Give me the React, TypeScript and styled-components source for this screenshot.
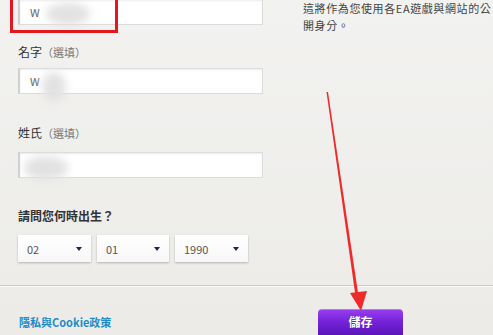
import styled, { createGlobalStyle } from "styled-components";

const GlobalStyle = createGlobalStyle`
  html, body {
    margin: 0;
    padding: 0;
    background: #efefed;
  }
  body {
    font-family: "Noto Sans CJK TC", "Noto Sans", sans-serif;
  }
`;

const Page = styled.div`
  position: relative;
  width: 493px;
  height: 335px;
  overflow: hidden;
  background: linear-gradient(180deg, #f2f2f0 0%, #ecebe8 100%);
  color: #333;
`;

const Body = styled.div`
  display: flex;
  padding-left: 18px;
  height: 285px;
`;

const FormColumn = styled.div`
  display: flex;
  flex-direction: column;
  width: 245px;
`;

const InfoColumn = styled.div`
  margin-left: 40px;
  font-size: 11px;
  line-height: 17px;
  letter-spacing: 0.6px;
  color: #444;
  white-space: nowrap;
`;

const Label = styled.div<{ $bold?: boolean; $top: number; $bottom: number }>`
  font-size: 12px;
  line-height: 16px;
  font-weight: ${({ $bold }) => ($bold ? 700 : 400)};
  color: #333;
  margin-top: ${({ $top }) => $top}px;
  margin-bottom: ${({ $bottom }) => $bottom}px;
`;

const Optional = styled.span`
  color: #777;
  font-size: 11px;
`;

const Field = styled.div<{ $top?: number }>`
  display: flex;
  align-items: center;
  height: 26px;
  margin-top: ${({ $top }) => $top ?? 0}px;
  box-sizing: border-box;
  background: #fff;
  border: 1px solid #dcdcdc;
  border-left: 2px solid #d0d0d0;
  box-shadow: inset 0 1px 2px rgba(0, 0, 0, 0.08);
  padding-left: 10px;
  font-size: 11px;
  color: #666;
`;

const Blob = styled.span<{ $w: number; $h: number; $dx: number; $dy: number }>`
  display: inline-block;
  width: ${({ $w }) => $w}px;
  height: ${({ $h }) => $h}px;
  margin-left: ${({ $dx }) => $dx}px;
  transform: translateY(${({ $dy }) => $dy}px);
  background: #e2e2e2;
  border-radius: 50%;
  filter: blur(4px);
`;

const SelectRow = styled.div`
  display: flex;
  gap: 6px;
`;

const Select = styled.div<{ $w: number }>`
  display: flex;
  align-items: center;
  justify-content: space-between;
  width: ${({ $w }) => $w}px;
  height: 27px;
  box-sizing: border-box;
  padding: 0 9px 0 9px;
  background: linear-gradient(180deg, #ffffff 0%, #f7f7f7 100%);
  box-shadow: 0 1px 2px rgba(0, 0, 0, 0.25);
  font-size: 11px;
  color: #555;
`;

const Caret = styled.span`
  width: 0;
  height: 0;
  border-left: 3.5px solid transparent;
  border-right: 3.5px solid transparent;
  border-top: 4px solid #2a1a5e;
`;

const Footer = styled.div`
  display: flex;
  align-items: flex-end;
  justify-content: space-between;
  height: 50px;
  box-sizing: border-box;
  border-top: 1px solid #c9c9c7;
  box-shadow: inset 0 1px 0 #fafafa;
  padding: 0 90px 0 19px;
`;

const PolicyLink = styled.a`
  font-size: 11px;
  font-weight: 700;
  color: #1f8cc6;
  text-decoration: none;
  line-height: 14px;
  margin-bottom: 6px;
`;

const SaveButton = styled.button`
  width: 85px;
  height: 26px;
  border: none;
  border-radius: 4px 4px 0 0;
  background: linear-gradient(180deg, #9a3ff0 0%, #7322d8 50%, #5a15b8 100%);
  box-shadow: inset 0 1px 0 rgba(255, 255, 255, 0.3);
  color: #fff;
  font-family: "Noto Sans CJK TC", sans-serif;
  font-size: 12px;
  font-weight: 700;
  padding: 0 0 2px;
`;

const Highlight = styled.div`
  position: absolute;
  left: 10px;
  top: -4px;
  width: 108px;
  height: 37px;
  box-sizing: border-box;
  border: 3px solid #e5161d;
  pointer-events: none;
`;

const ArrowLayer = styled.svg`
  position: absolute;
  left: 0;
  top: 0;
  pointer-events: none;
`;

export default function App() {
  return (
    <>
      <GlobalStyle />
      <Page>
        <Body>
          <FormColumn>
            <Field $top={-1}>
              W<Blob $w={44} $h={22} $dx={6} $dy={2} />
            </Field>
            <Label $top={19} $bottom={8}>
              名字<Optional>（選填）</Optional>
            </Label>
            <Field>
              W<Blob $w={24} $h={30} $dx={2} $dy={6} />
            </Field>
            <Label $top={31} $bottom={11}>
              姓氏<Optional>（選填）</Optional>
            </Label>
            <Field>
              <Blob $w={44} $h={24} $dx={-6} $dy={3} />
            </Field>
            <Label $bold $top={30} $bottom={11}>
              請問您何時出生？
            </Label>
            <SelectRow>
              <Select $w={73}>
                02<Caret />
              </Select>
              <Select $w={72}>
                01<Caret />
              </Select>
              <Select $w={73}>
                1990<Caret />
              </Select>
            </SelectRow>
          </FormColumn>
          <InfoColumn>
            這將作為您使用各EA遊戲與網站的公
            <br />
            開身分。
          </InfoColumn>
        </Body>
        <Footer>
          <PolicyLink href="#">隱私與Cookie政策</PolicyLink>
          <SaveButton>儲存</SaveButton>
        </Footer>
        <Highlight />
        <ArrowLayer width="493" height="335" viewBox="0 0 493 335">
          <polygon points="326.5,92 328,92 358.5,296 355.5,296" fill="#ee2a2a" />
          <polygon points="350,293 367,291 361,311" fill="#ee2a2a" />
        </ArrowLayer>
      </Page>
    </>
  );
}
